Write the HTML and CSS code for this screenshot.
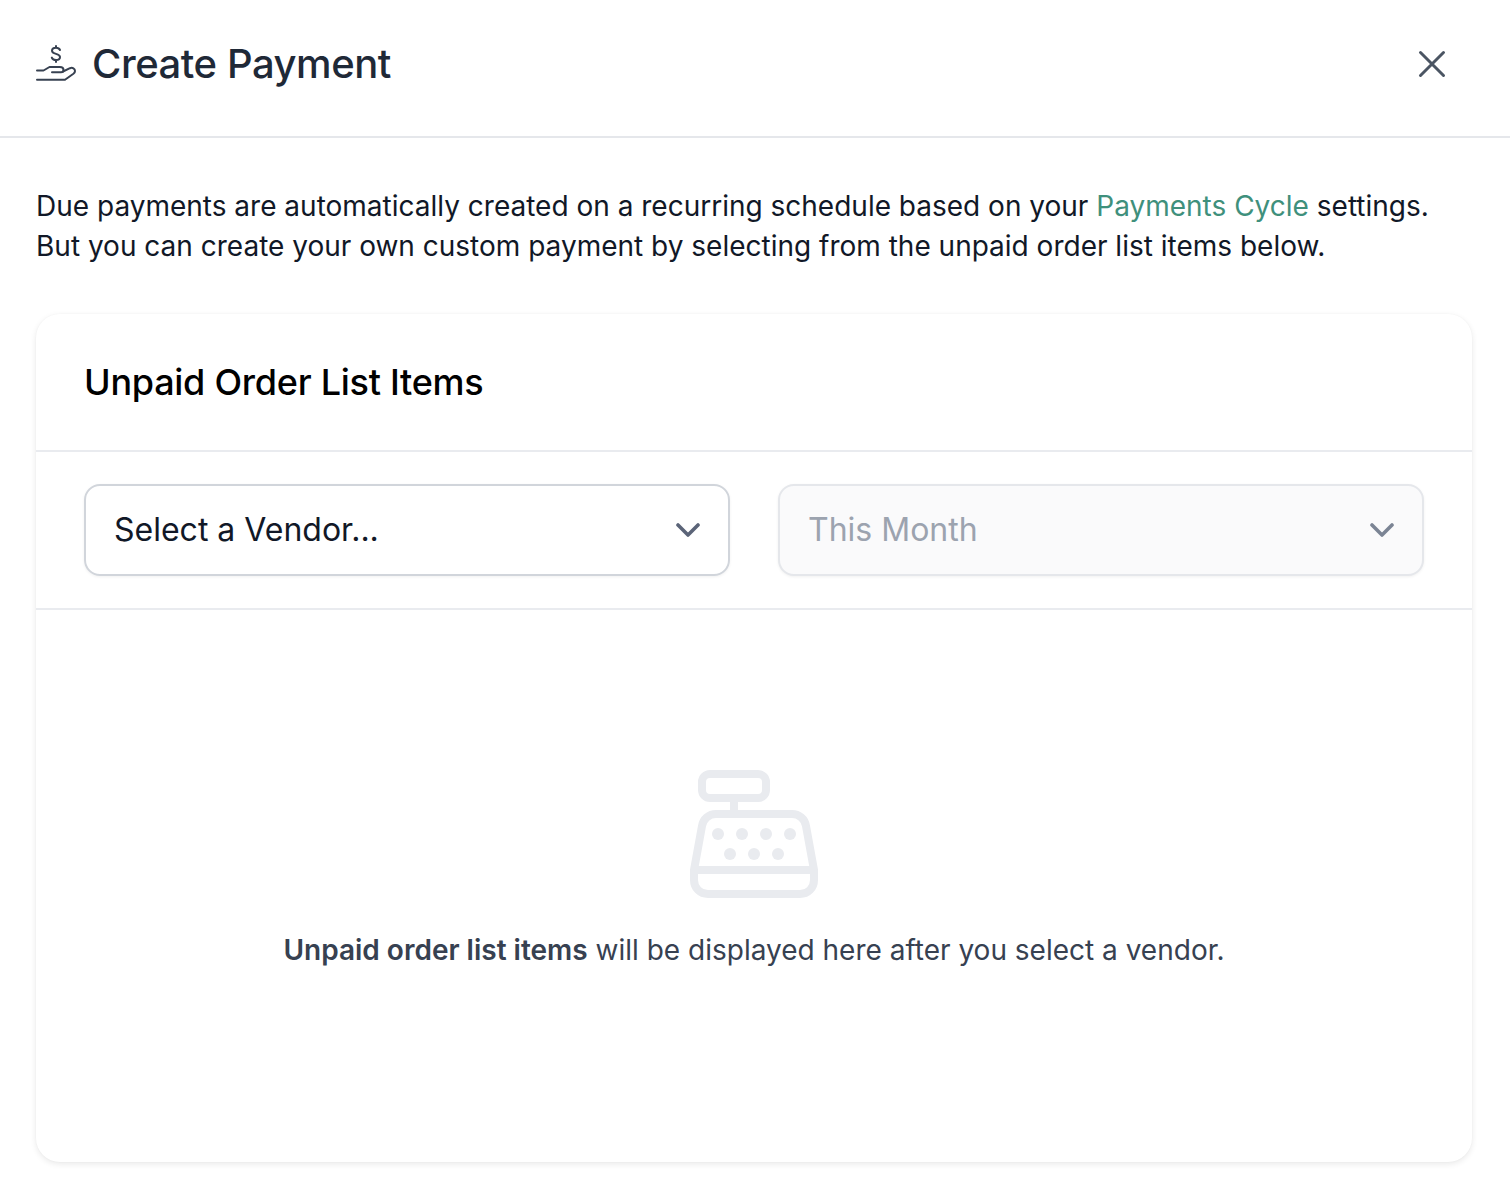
FILE: index.html
```html
<!DOCTYPE html>
<html lang="en">
<head>
<meta charset="utf-8">
<title>Create Payment</title>
<link rel="stylesheet" href="styles.css">
</head>
<body>
<header class="modal-header">
  <div class="modal-title">
    <svg class="hand-icon" width="40" height="38" viewBox="36 46 40 38" fill="none" stroke="#374151" stroke-width="2" stroke-linecap="round" stroke-linejoin="round">
      <path d="M60 51c-.6-1.400-2-2.200-4-2.200-2.400 0-4 1.200-4 3 0 4 8 2.200 8 6.200 0 1.800-1.700 3-4 3-2.200 0-3.700-.9-4.200-2.400M56 47v1.800M56 61v2"/>
      <path d="M37 71.500h6.500l6-3.500H60c2.500 0 3.500 1.500 3.500 3 0 1.300-1 2.300-2.500 2.300h-9"/>
      <path d="M63 72.500l7-3.300c2.500-1 5 .5 5 2.800 0 1.200-.6 2-1.600 2.800L65 80.700H37"/>
    </svg>
    <h1 class="title-text">Create Payment</h1>
  </div>
  <svg class="close-icon" width="28" height="28" viewBox="0 0 28 28" fill="none" stroke="#4b5563" stroke-width="3" stroke-linecap="round">
    <path d="M2.500 2.500l23 23M25.500 2.500l-23 23"/>
  </svg>
</header>
<main class="modal-body">
  <p class="intro">Due payments are automatically created on a recurring schedule based on your <a class="link">Payments Cycle</a> settings.<br>But you can create your own custom payment by selecting from the unpaid order list items below.</p>
  <section class="card">
    <h2 class="card-title">Unpaid Order List Items</h2>
    <div class="filters">
      <div class="select">
        <span class="select-label">Select a Vendor...</span>
        <svg width="24" height="14" viewBox="0 0 24 14" fill="none" stroke="#5b6478" stroke-width="3.600" stroke-linecap="round" stroke-linejoin="round"><path d="M2 2l10 10L22 2"/></svg>
      </div>
      <div class="select select-disabled">
        <span class="select-label">This Month</span>
        <svg width="24" height="14" viewBox="0 0 24 14" fill="none" stroke="#7b8494" stroke-width="3.600" stroke-linecap="round" stroke-linejoin="round"><path d="M2 2l10 10L22 2"/></svg>
      </div>
    </div>
    <div class="empty">
      <svg class="register" width="128" height="128" viewBox="690 770 128 128" fill="none" stroke="#e9ebef" stroke-width="8" stroke-linejoin="round">
        <rect x="702" y="774" width="64" height="24" rx="8"/>
        <path d="M734 798v16"/>
        <path d="M716 814h76c7 0 13 5 14 12l8 44v10c0 8-6 14-14 14H708c-8 0-14-6-14-14v-10l8-44c1-7 7-12 14-12z"/>
        <path d="M694 870h120"/>
        <g fill="#e9ebef" stroke="none">
          <circle cx="718" cy="834" r="6"/><circle cx="742" cy="834" r="6"/><circle cx="766" cy="834" r="6"/><circle cx="790" cy="834" r="6"/>
          <circle cx="730" cy="854" r="6"/><circle cx="754" cy="854" r="6"/><circle cx="778" cy="854" r="6"/>
        </g>
      </svg>
      <p class="empty-text"><strong>Unpaid order list items</strong> will be displayed here after you select a vendor.</p>
    </div>
  </section>
</main>
</body>
</html>
```
FILE: styles.css
```css
* { box-sizing: border-box; }
html, body { margin: 0; padding: 0; }
body {
  width: 1510px;
  height: 1204px;
  background: #fff;
  font-family: Inter, "Noto Sans", sans-serif;
  overflow: hidden;
}
.modal-header {
  height: 138px;
  border-bottom: 2px solid #e5e7eb;
  padding: 0 64px 8px 36px;
  display: flex;
  align-items: center;
  justify-content: space-between;
}
.modal-title { display: flex; align-items: center; gap: 16px; }
.hand-icon { display: block; }
.title-text {
  margin: 0;
  font-size: 40px;
  line-height: 56px;
  font-weight: 450;
  letter-spacing: -0.45px;
  color: #1f2937;
}
.close-icon { display: block; }
.modal-body { padding: 48px 38px 0 36px; }
.intro {
  margin: 0;
  font-size: 28px;
  line-height: 40px;
  color: #111827;
}
.link { color: #3f907c; }
.card {
  margin-top: 48px;
  height: 848px;
  border-radius: 24px;
  background: #fff;
  box-shadow: 0 2px 6px rgba(0, 0, 0, 0.09), 0 0 2px rgba(0, 0, 0, 0.03);
  display: flex;
  flex-direction: column;
}
.card-title {
  margin: 0;
  height: 138px;
  padding: 40px 48px 0;
  border-bottom: 2px solid #e9ebef;
  font-size: 36px;
  line-height: 56px;
  font-weight: 450;
  letter-spacing: -0.26px;
  color: #000;
}
.filters {
  height: 158px;
  padding: 32px 48px;
  border-bottom: 2px solid #e9ebef;
  display: grid;
  grid-template-columns: 646px 646px;
  column-gap: 48px;
}
.select {
  height: 92px;
  border: 2px solid #d1d5db;
  border-radius: 16px;
  padding: 0 28px;
  display: flex;
  align-items: center;
  justify-content: space-between;
  font-size: 32px;
  font-weight: 420;
  color: #111827;
  box-shadow: 0 1px 3px rgba(0, 0, 0, 0.06);
}
.select-label { position: relative; top: -1px; }
.select-disabled {
  background: #fafafb;
  border-color: #e5e7eb;
  color: #9ca3af;
}
.empty {
  flex: 1;
  padding-top: 160px;
  display: flex;
  flex-direction: column;
  align-items: center;
}
.register { display: block; }
.empty-text {
  margin: 32px 0 0;
  font-size: 28px;
  line-height: 40px;
  color: #374151;
}
.empty-text strong { font-weight: 600; }
```
